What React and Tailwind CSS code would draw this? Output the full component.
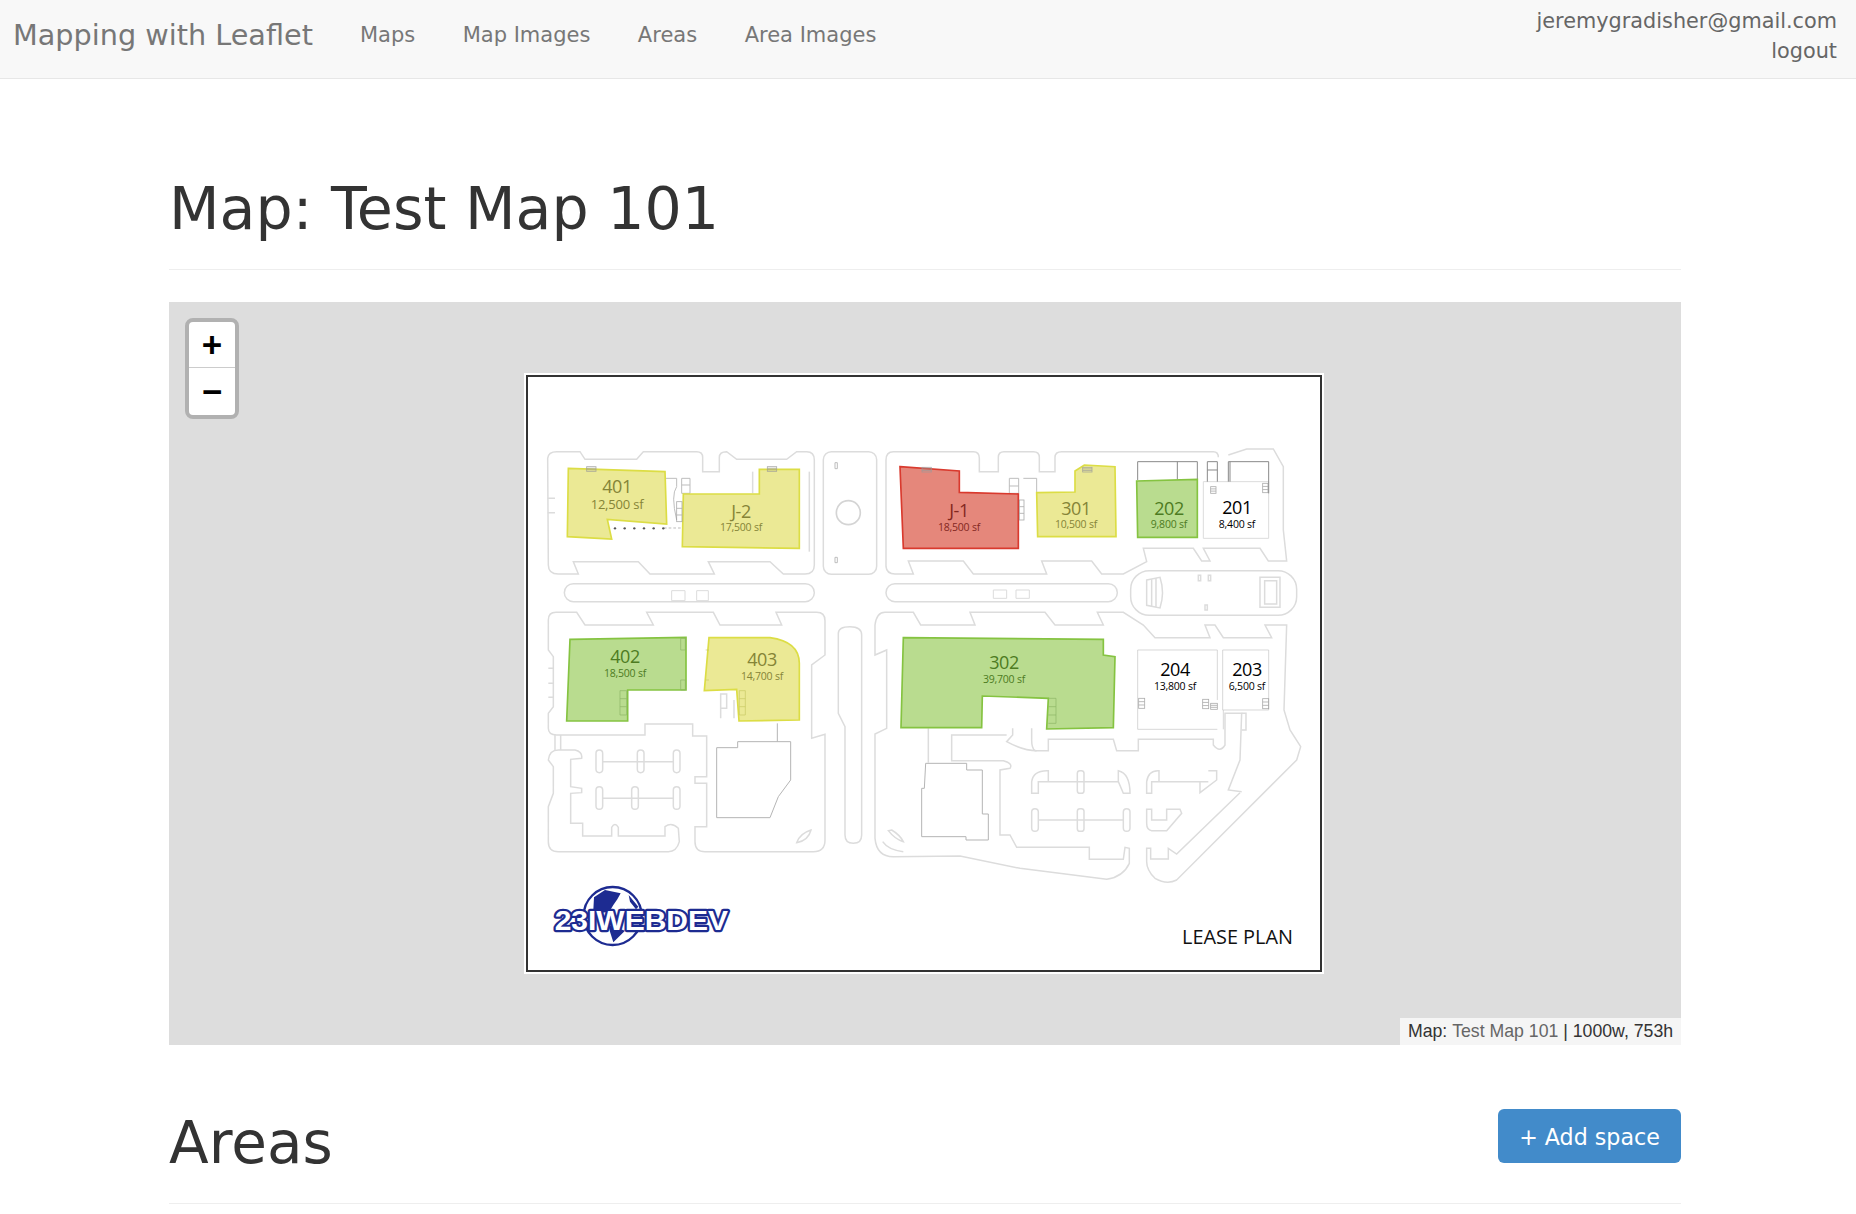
// App.jsx
import React from "react";

const Z3 = "translate(520 370) scale(0.33333)";
const Z4 = "translate(860 370) scale(0.33333)";
const Z5 = "translate(530 600) scale(0.33333)";
const Z6 = "translate(860 600) scale(0.33333)";

const YELLOW = { fill: "#ebe995", stroke: "#dcdd45", text: "#858437" };
const GREEN = { fill: "#b9dc8f", stroke: "#85c341", text: "#4d7b22" };
const RED = { fill: "#e5877b", stroke: "#d93a2e", text: "#84281f" };
const WHITE = { text: "#000000" };

const outlines = [
  {
    t: Z3,
    lines: [
      "M83 265 Q85 245 110 245 L180 245 L195 268 L350 268 L370 245 L530 245 Q548 245 548 262 L548 305 L598 305 L598 262 Q598 245 620 245 L650 268 L800 268 L830 245 L860 245 Q883 245 883 270 L883 585 Q883 612 855 612 L790 612 L750 575 L565 575 L583 612 L390 612 L355 575 L160 575 L175 612 L115 612 Q85 612 85 585 Z",
      "M868 305 L868 545",
      "M83 385 L105 385 M83 428 L105 428",
      "M698 305 L698 370",
    ],
    rects: [
      [133, 641, 750, 54, 27],
      [910, 245, 160, 368, 24],
    ],
  },
  {
    t: Z4,
    lines: [
      "M78 270 Q78 245 100 245 L340 245 Q358 245 358 265 L358 305 L415 305 L415 262 Q415 245 432 245 L520 245 Q538 245 538 262 L538 305 L585 305 L585 262 Q585 245 605 245 L1060 245 Q1075 245 1075 262",
      "M78 270 L78 590 Q80 612 105 612 L160 612 L145 573 L310 573 L340 612 L560 612 L545 573 L695 573 L725 612 L790 612 L860 575 L850 535 L1000 535 L1025 573 L1050 573 L1030 535 L1200 535 L1225 573 L1280 573 L1270 480 L1270 290 L1240 237 L1160 237 L1105 255",
      "M1200 622 L1260 622 L1260 712 L1200 712 Z M1214 632 L1250 632 L1250 702 L1214 702 Z",
      "M860 630 L900 622 Q915 668 900 714 L860 706 Z M875 628 L875 708 M888 625 L888 711",
      "M1015 616 L1022 616 L1022 632 L1015 632 Z M1045 616 L1052 616 L1052 632 L1045 632 Z M1035 705 L1042 705 L1042 720 L1035 720 Z",
    ],
    rects: [
      [78, 641, 694, 54, 27],
      [812, 602, 498, 134, 56],
    ],
  },
  {
    t: Z5,
    lines: [
      "M55 60 Q55 37 78 37 L140 37 L165 75 L370 75 L350 37 L550 37 L570 75 L755 75 L738 37 L860 37 Q885 37 885 62 L885 165 L845 195 L845 415 L885 403 L885 720 Q885 755 850 755 L525 755 Q495 755 495 725 L495 680 L530 680 L530 550 L495 550 L495 530 L530 530 L530 408 L488 408 L488 372 L345 372 L345 405 L80 405 Q55 405 55 385 L55 340 L70 320 L70 170 L55 150 Z",
      "M55 480 Q58 450 85 450 L135 450 Q158 455 155 475 L122 478 L122 560 L155 565 L155 578 L122 580 L122 670 L158 670 L158 708 L245 708 L245 682 Q255 665 265 682 L265 708 L405 708 L405 680 Q425 665 445 685 L448 725 Q440 755 415 755 L85 755 Q55 755 55 725 L55 620 L70 580 L70 500 Z",
      "M218 485 L430 485 M342 485 L322 485 M218 595 L430 595",
      "M925 100 Q925 80 960 80 Q995 80 995 105 L995 705 Q995 730 970 730 Q945 730 945 705 L945 380 L925 340 Z",
      "M800 728 Q810 700 843 690 Q835 722 800 728 Z",
      "M55 205 L70 205 M55 250 L70 250 M55 292 L70 292",
      "M75 405 L75 450 M92 405 L92 450",
      "M572 282 L590 282 L590 325 L572 325 Z M572 325 L572 355 M612 300 L612 355",
    ],
    rects: [
      [198, 450, 20, 68, 10],
      [322, 450, 20, 68, 10],
      [430, 450, 20, 68, 10],
      [198, 560, 20, 68, 10],
      [305, 560, 20, 68, 10],
      [430, 560, 20, 68, 10],
    ],
  },
  {
    t: Z6,
    lines: [
      "M45 75 Q50 37 75 37 L160 37 L182 75 L345 75 L330 37 L555 37 L585 75 L730 75 L712 37 L790 37 L850 75 L885 113 L1050 113 L1035 75 L1065 75 L1090 113 L1235 113 L1215 75 L1280 75 L1272 330 L1290 390 L1322 440 L1310 480 L950 840 Q920 855 885 835 Q860 810 860 785 L860 745 L872 745 L872 777 L925 777 L925 745 L950 762 L1140 578",
      "M1145 575 L1105 570 L1140 480 L1145 340 L1095 340 L1095 435 Q1080 460 1060 435 L1060 418 L835 418 L835 452 L770 452 L760 418 L565 418 L565 452 L525 452 Q515 445 515 420 L515 385",
      "M458 385 L458 405 L440 425 Q490 452 530 452",
      "M45 75 L45 165 L80 150 L80 385 L45 402 L45 715 Q50 770 100 770 L300 768 L480 805 L740 838 Q790 830 808 790 L808 745 L795 742 L790 778 L688 778 L688 742 L470 742 L450 705 L420 705 L420 510 L450 505 Q460 490 430 482 L275 482 L275 405 L440 405",
      "M205 385 L205 488",
      "M515 580 L515 545 Q520 510 565 512 L565 545 L535 545 L535 580 Z M565 545 L775 545",
      "M775 512 Q810 520 810 580 L790 580 L775 545 Z",
      "M860 580 L860 545 Q865 510 897 512 L897 545 L875 545 L875 580 Z M897 545 L1045 545",
      "M1045 512 L1070 512 L1070 540 L1020 578 L1020 545",
      "M860 628 L875 628 L875 660 L920 660 L920 628 L960 628 L965 640 L920 692 L875 692 Q860 690 860 670 Z",
      "M535 660 L790 660",
      "M95 690 Q120 705 130 725 Q105 718 85 692 Z M68 725 Q85 750 130 755",
      "M1145 340 L1158 340 L1158 390 L1145 390",
    ],
    rects: [
      [652, 512, 20, 68, 8],
      [515, 626, 20, 68, 10],
      [652, 626, 20, 68, 8],
      [790, 626, 20, 68, 10],
    ],
  },
];

const spaces = [
  { t: Z3, c: YELLOW, d: "M145 295 L435 305 L440 462 L262 448 L275 507 L142 500 Z" },
  { t: Z3, c: YELLOW, d: "M718 298 L838 298 L838 535 L487 530 L490 372 L718 372 Z" },
  { t: Z4, c: RED, d: "M120 290 L298 303 L298 367 L475 372 L475 535 L130 535 Z" },
  { t: Z4, c: YELLOW, d: "M530 368 L645 366 L645 303 L673 285 L765 290 L768 500 L533 500 Z" },
  { t: Z4, c: GREEN, d: "M830 333 L1012 328 L1012 502 L833 502 Z" },
  { t: Z5, c: GREEN, d: "M120 118 L468 112 L468 270 L293 270 L293 363 L110 363 Z" },
  { t: Z5, c: YELLOW, d: "M537 113 L720 113 Q808 125 808 190 L808 360 L627 363 L620 268 L523 272 Z" },
  { t: Z6, c: GREEN, d: "M130 113 L730 118 L730 165 L765 170 L760 383 L560 387 L565 295 L367 288 L365 383 L123 383 Z" },
];

// label positions are page pixels, taken from the reference
const labels = [
  { n: "401", s: "12,500 sf", x: 617, y: 486, sy: 504, ss: 13, c: YELLOW },
  { n: "J-2", s: "17,500 sf", x: 741, y: 511, sy: 527, ss: 10.5, c: YELLOW },
  { n: "J-1", s: "18,500 sf", x: 959, y: 510, sy: 527, ss: 10.5, c: RED },
  { n: "301", s: "10,500 sf", x: 1076, y: 508, sy: 524, ss: 10.5, c: YELLOW },
  { n: "202", s: "9,800 sf", x: 1169, y: 508, sy: 524, ss: 10.5, c: GREEN },
  { n: "201", s: "8,400 sf", x: 1237, y: 507, sy: 524, ss: 10.5, c: WHITE },
  { n: "402", s: "18,500 sf", x: 625, y: 656, sy: 673, ss: 10.5, c: GREEN },
  { n: "403", s: "14,700 sf", x: 762, y: 659, sy: 676, ss: 10.5, c: YELLOW },
  { n: "302", s: "39,700 sf", x: 1004, y: 662, sy: 679, ss: 10.5, c: GREEN },
  { n: "204", s: "13,800 sf", x: 1175, y: 669, sy: 686, ss: 10.5, c: WHITE },
  { n: "203", s: "6,500 sf", x: 1247, y: 669, sy: 686, ss: 10.5, c: WHITE },
];

const stairs = [
  [Z3, 742, 290, 28, 14],
  [Z3, 200, 290, 28, 14],
  [Z3, 470, 395, 16, 60],
  [Z4, 478, 390, 14, 60],
  [Z4, 186, 292, 28, 14],
  [Z4, 668, 292, 28, 14],
  [Z4, 1052, 350, 16, 20],
  [Z4, 1208, 340, 16, 28],
  [Z6, 836, 295, 18, 30],
  [Z6, 1028, 298, 18, 28],
  [Z6, 1052, 310, 20, 18],
  [Z6, 1208, 296, 18, 30],
];

const FloorPlan = () => {
  return (
    <svg width="800" height="601" viewBox="524 373 800 601" className="block shrink-0 bg-white">
      <rect x="527" y="376" width="794" height="595" fill="none" stroke="#333333" strokeWidth="2" />

      {outlines.map((g, i) => (
        <g key={i} transform={g.t} fill="none" stroke="#dcdcdc" strokeWidth="4.5">
          {g.lines.map((d, j) => (
            <path key={j} d={d} />
          ))}
          {g.rects.map((r, j) => (
            <rect key={j} x={r[0]} y={r[1]} width={r[2]} height={r[3]} rx={r[4]} />
          ))}
        </g>
      ))}

      {/* buildings and thin walls */}
      <g transform={Z3} fill="none" stroke="#bdbdbd" strokeWidth="3">
        <circle cx="985" cy="428" r="36" stroke="#d4d4d4" strokeWidth="5" />
        <path d="M437 325 L470 325 L470 350 Q452 375 470 450 M485 325 L510 325 L510 370 L485 370 Z M485 345 L510 345" />
        <path d="M432 474 L485 474" strokeDasharray="8 6" />
        <path d="M945 278 L952 278 L952 296 L945 296 Z M945 562 L952 562 L952 578 L945 578 Z" />
        <path d="M455 662 L495 662 L495 692 L455 692 Z M530 662 L565 662 L565 692 L530 692 Z" stroke="#dcdcdc" />
      </g>
      <g transform={Z3} fill="#555555">
        {[285, 314, 343, 372, 401, 430].map((x) => (
          <circle key={x} cx={x} cy="475" r="3.5" />
        ))}
      </g>
      <g transform={Z4} fill="none" stroke="#bdbdbd" strokeWidth="3">
        <path d="M448 325 L476 325 L476 370 L448 370 Z M448 348 L476 348 M490 325 L530 325 L530 366" />
        <path d="M400 660 L440 660 L440 685 L400 685 Z M468 660 L508 660 L508 685 L468 685 Z" stroke="#dcdcdc" />
        <path d="M1030 335 L1226 335 L1226 505 L1030 505 Z" stroke="#dcdcdc" />
        <path d="M833 330 L833 275 L1012 275 L1012 330 M952 275 L952 328 M1042 335 L1042 275 L1072 275 L1072 335 M1042 300 L1072 300 M1105 335 L1105 275 L1226 275 L1226 370 M1110 275 L1110 335" stroke="#8a8a8a" />
      </g>
      <g transform={Z5} fill="none" stroke="#b5b5b5" strokeWidth="3">
        <path d="M560 443 L623 443 L623 425 L782 425 L782 540 L745 590 L720 653 L560 653 Z M742 370 L742 425" />
      </g>
      <g transform={Z6} fill="none" stroke="#b5b5b5" strokeWidth="3">
        <path d="M197 490 L320 490 L320 510 L367 510 L367 642 L385 642 L385 720 L318 720 L318 710 L185 710 L185 565 L193 565 Z" />
        <path d="M833 150 L1072 150 L1072 300 M833 150 L833 388 L1072 388 M1088 150 L1226 150 L1226 330 L1088 330 L1088 150 M1090 330 L1090 388" stroke="#c4c4c4" strokeWidth="2" />
      </g>

      {spaces.map((s, i) => (
        <path key={i} transform={s.t} d={s.d} fill={s.c.fill} stroke={s.c.stroke} strokeWidth="5" strokeLinejoin="miter" />
      ))}

      {stairs.map((s, i) => (
        <g key={i} transform={s[0]} fill="none" stroke="#9a9a9a" strokeWidth="2.5" opacity="0.8">
          <rect x={s[1]} y={s[2]} width={s[3]} height={s[4]} />
          <path d={`M${s[1]} ${s[2] + s[4] / 3} h${s[3]} M${s[1]} ${s[2] + (2 * s[4]) / 3} h${s[3]}`} />
        </g>
      ))}

      {/* stair columns under the green and yellow spaces */}
      <g transform={Z5} fill="none" stroke="#8cb565" strokeWidth="2">
        <path d="M270 272 L290 272 L290 345 L270 345 Z M270 296 H290 M270 320 H290 M452 115 H466 V150 H452 Z M452 240 H466 V270 H452 Z" />
        <path d="M628 272 L646 272 L646 345 L628 345 Z M628 296 H646 M628 320 H646 M527 150 L537 150 M527 240 H537" stroke="#c7c864" />
      </g>
      <g transform={Z6} fill="none" stroke="#8cb565" strokeWidth="2">
        <path d="M565 295 H588 V370 H565 M565 320 H588 M565 345 H588" />
      </g>

      <g fontFamily="'Open Sans', 'Noto Sans', sans-serif" textAnchor="middle" dominantBaseline="central">
        {labels.map((l) => (
          <g key={l.n} fill={l.c.text}>
            <text x={l.x} y={l.y} fontSize="18" letterSpacing="-0.4">
              {l.n}
            </text>
            <text x={l.x} y={l.sy} fontSize={l.ss} letterSpacing="-0.2">
              {l.s}
            </text>
          </g>
        ))}
      </g>

      <text x="1182" y="944" fontFamily="'Open Sans', sans-serif" fontSize="20" fill="#111111" textLength="111" lengthAdjust="spacingAndGlyphs">
        LEASE PLAN
      </text>

      {/* logo */}
      <g transform="translate(530 860) scale(0.33333)">
        <circle cx="248" cy="168" r="87" fill="#ffffff" stroke="#1d2b91" strokeWidth="7" />
        <path d="M190 150 L192 112 L225 90 L272 100 L262 118 L250 135 L238 155 L215 158 Z" fill="#1d2b91" />
        <path d="M296 105 L325 140 L318 148 L300 125 Z M235 195 L285 212 L250 247 L240 215 Z" fill="#1d2b91" />
        <text
          x="74"
          y="211"
          fontFamily="'Liberation Sans', sans-serif"
          fontWeight="700"
          fontSize="84"
          fill="#ffffff"
          stroke="#1d2b91"
          strokeWidth="13"
          strokeLinejoin="round"
          paintOrder="stroke"
          textLength="520"
          lengthAdjust="spacingAndGlyphs"
        >
          23IWEBDEV
        </text>
      </g>
    </svg>
  );
};

const App = () => {
  return (
    <div className="min-h-[1214px] bg-white text-[#333333] font-['DejaVu_Sans',sans-serif] overflow-hidden">
      <nav className="flex h-[79px] items-start justify-between border-b border-[#e7e7e7] bg-[#f8f8f8] text-[#777777]">
        <div className="flex items-center">
          <a className="ml-[13px] text-[28.7px] leading-[70px]">Mapping with Leaflet</a>
          <ul className="ml-[47px] flex gap-[47.5px] text-[21px] leading-[70px]">
            <li>Maps</li>
            <li>Map Images</li>
            <li>Areas</li>
            <li>Area Images</li>
          </ul>
        </div>
        <div className="mr-[19px] pt-[6px] text-right text-[20.8px] leading-[30px] text-[#666666]">
          <div>jeremygradisher@gmail.com</div>
          <div>logout</div>
        </div>
      </nav>

      <main className="ml-[169px] w-[1512px]">
        <h1 className="mt-[76px] border-b border-[#eeeeee] pb-[6px] text-[58.6px] font-normal leading-[108px]">
          Map: Test Map 101
        </h1>

        <div className="relative mt-[32px] flex h-[743px] items-center justify-center bg-[#dddddd] pr-[2px]">
          <FloorPlan />
          <div className="absolute left-[16px] top-[16px] w-[54px] overflow-hidden rounded-[8px] border-4 border-[#b1b1b1] bg-white text-black">
            <div className="flex h-[46px] items-center justify-center border-b border-[#cccccc] pt-[8px] font-['Liberation_Mono',monospace] text-[35px] font-bold leading-none">
              +
            </div>
            <div className="flex h-[47px] items-center justify-center pt-[8px] font-['Liberation_Mono',monospace] text-[35px] font-bold leading-none">
              −
            </div>
          </div>
          <div className="absolute bottom-0 right-0 flex h-[27px] w-[281px] items-center justify-center whitespace-pre bg-[#f5f5f5] font-['Liberation_Sans',sans-serif] text-[17.7px] text-[#333333]">
            Map: <span className="text-[#666666]">Test Map 101</span> | 1000w, 753h
          </div>
        </div>

        <div className="mt-[64px] flex items-start justify-between border-b border-[#eeeeee] pb-[26px]">
          <h1 className="text-[58px] font-normal leading-[68px]">Areas</h1>
          <button className="h-[54px] w-[183px] rounded-[6px] bg-[#428bca] pt-[3px] text-[22.2px] text-white">+ Add space</button>
        </div>
      </main>
    </div>
  );
};

export default App;
